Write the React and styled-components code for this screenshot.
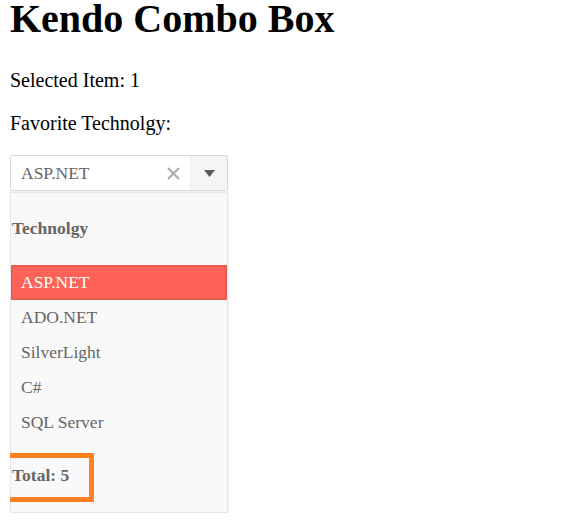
import React from 'react';
import styled, { createGlobalStyle } from 'styled-components';

const GlobalStyle = createGlobalStyle`
  body {
    margin: 0 10px;
    font-family: "Liberation Serif", "Times New Roman", serif;
    font-size: 20px;
    color: #000;
    background: #fff;
  }
`;

const technologies = ['ASP.NET', 'ADO.NET', 'SilverLight', 'C#', 'SQL Server'];

export default function App() {
  const selected = 0;

  return (
    <>
      <GlobalStyle />
      <Page>
        <Title>Kendo Combo Box</Title>
        <Para>Selected Item: {selected + 1}</Para>
        <Para>Favorite Technolgy:</Para>
        <ComboWrap>
          <Combo>
            <ComboInput>{technologies[selected]}</ComboInput>
            <ClearButton>
              <svg width="13" height="13" viewBox="0 0 13 13">
                <path d="M1 1 L12 12 M12 1 L1 12" stroke="#a9a9a9" strokeWidth="2" />
              </svg>
            </ClearButton>
            <ArrowButton>
              <svg width="11" height="7" viewBox="0 0 11 7">
                <path d="M0 0 H11 L5.5 7 Z" fill="#5c5c5c" />
              </svg>
            </ArrowButton>
          </Combo>
          <Popup>
            <Header>Technolgy</Header>
            <List>
              {technologies.map((t, i) => (
                <Item key={t} $selected={i === selected}>{t}</Item>
              ))}
            </List>
            <Footer>
              Total: {technologies.length}
              <Highlight />
            </Footer>
          </Popup>
        </ComboWrap>
      </Page>
    </>
  );
}

const Page = styled.div`
  padding-top: 0;
`;

const Title = styled.h1`
  font-size: 40px;
  font-weight: bold;
  margin: 0 0 31px;
  line-height: 38px;
`;

const Para = styled.p`
  margin: 0 0 20px;
  line-height: 23px;
`;

const ComboWrap = styled.div`
  width: 218px;
  font-size: 17.5px;
  color: #656565;
`;

const Combo = styled.div`
  display: flex;
  align-items: stretch;
  height: 36px;
  box-sizing: border-box;
  border: 1px solid #d9d9d9;
  border-radius: 2px;
  background: #fff;
  box-shadow: 0 1px 1px rgba(0, 0, 0, 0.04);
`;

const ComboInput = styled.div`
  flex: 1;
  display: flex;
  align-items: center;
  padding: 1px 0 0 10px;
  line-height: 25px;
`;

const ClearButton = styled.span`
  width: 23px;
  display: flex;
  align-items: center;
  justify-content: flex-start;
`;

const ArrowButton = styled.span`
  width: 36px;
  display: flex;
  align-items: center;
  justify-content: center;
  background: #f5f5f5;
  border-left: 1px solid #f0f0f0;
`;

const Popup = styled.div`
  margin-top: 1px;
  border: 1px solid #e6e6e6;
  background: #f9f9f9;
  box-shadow: 0 2px 4px rgba(0, 0, 0, 0.07);
`;

const Header = styled.div`
  font-weight: bold;
  line-height: 25px;
  padding: 23px 0 24px 1px;
`;

const List = styled.ul`
  list-style: none;
  margin: 0;
  padding: 0;
`;

const Item = styled.li`
  line-height: 25px;
  padding: 5px 10px;
  color: ${p => (p.$selected ? '#fff' : '#656565')};
  background: ${p => (p.$selected ? '#ff6358' : 'transparent')};
  box-shadow: ${p => (p.$selected ? 'inset 0 0 0 2px rgba(0, 0, 0, 0.08)' : 'none')};
`;

const Footer = styled.div`
  position: relative;
  font-weight: bold;
  line-height: 25px;
  padding: 23px 0 24px 1px;
`;

const Highlight = styled.span`
  position: absolute;
  left: -9px;
  top: 13px;
  width: 92px;
  height: 49px;
  box-sizing: border-box;
  border: 5px solid #ff8023;
`;
